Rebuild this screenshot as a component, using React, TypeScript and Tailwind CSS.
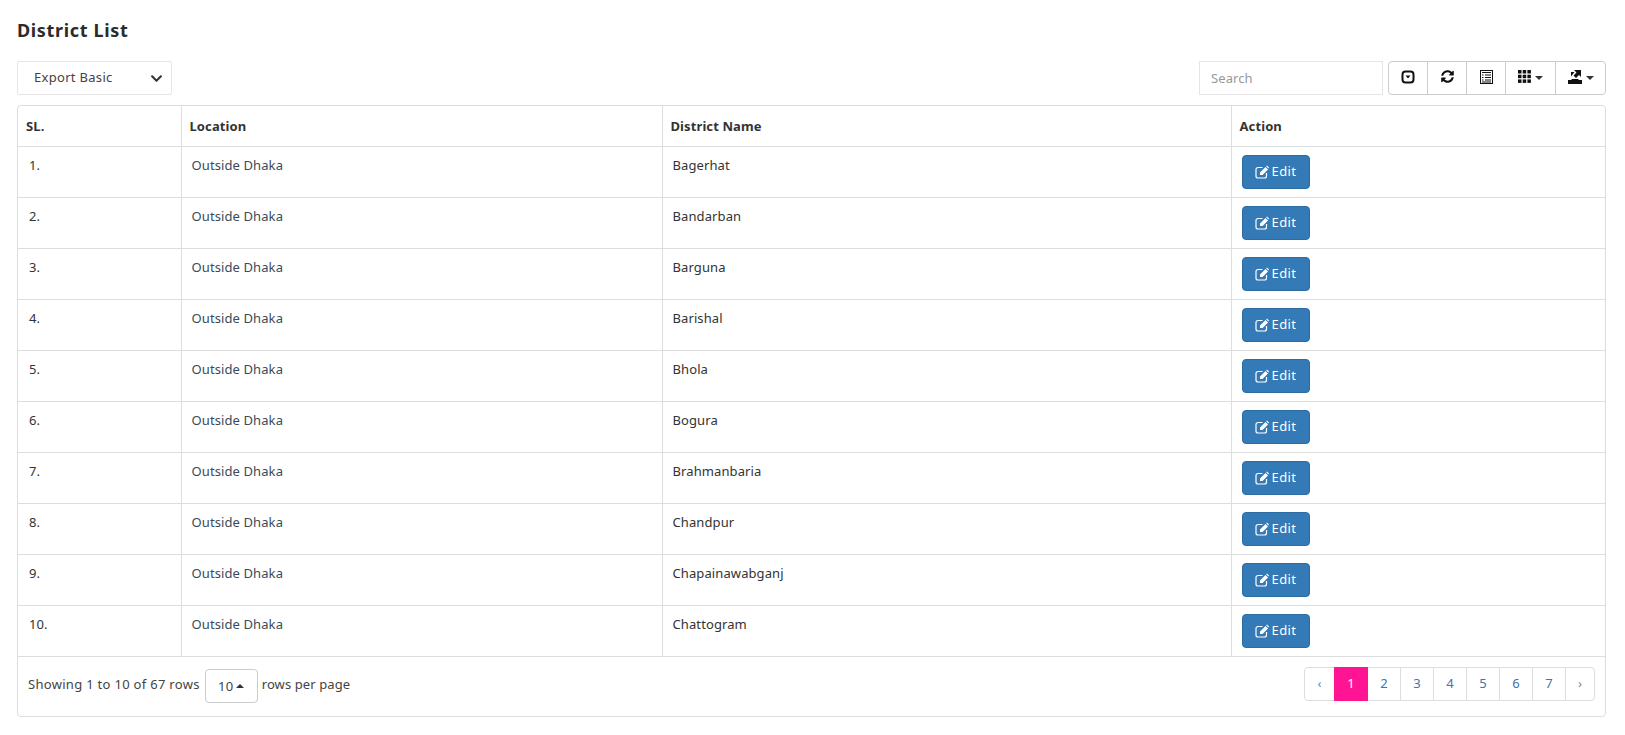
import React from "react";
import { FaSyncAlt, FaChevronDown } from "react-icons/fa";

const names = ["Bagerhat","Bandarban","Barguna","Barishal","Bhola","Bogura","Brahmanbaria","Chandpur","Chapainawabganj","Chattogram"];

function Caret({ up }: { up?: boolean }) {
  return <span className={up ? "inline-block w-0 h-0 border-x-[4px] border-x-transparent border-b-[4px] border-b-[#333] ml-[3px]" : "inline-block w-0 h-0 border-x-[4px] border-x-transparent border-t-[4px] border-t-[#333] ml-[4px] mt-[2px]"} />;
}

function EditIcon() {
  return (
    <svg width="14" height="14" viewBox="0 0 14 14" fill="none">
      <path d="M7.500 2.500H3a2 2 0 0 0-2 2v6.500a2 2 0 0 0 2 2h6.500a2 2 0 0 0 2-2V8" stroke="#fff" strokeWidth="1.200" />
      <path d="M5 7.500 10.500 2 13 4.500 7.500 10H5z M11.200 1.300 12 .6l2 2-.7.800z" fill="#fff" />
    </svg>
  );
}

function ListIcon() {
  return (
    <svg width="13" height="14" viewBox="0 0 13 14" fill="none">
      <rect x=".5" y=".5" width="12" height="13" stroke="#111" />
      <path d="M2 2.500h9M2 5h1.500M5 5h6M2 7.500h1.500M5 7.500h6M2 10h1.500M5 10h6M2 12h9" stroke="#111" strokeWidth="1.100" />
    </svg>
  );
}

function GridIcon() {
  return (
    <svg width="13" height="13" viewBox="0 0 13 13" fill="#111">
      <rect x="0" y="0" width="3.500" height="3.500" /><rect x="4.700" y="0" width="3.500" height="3.500" /><rect x="9.400" y="0" width="3.500" height="3.500" />
      <rect x="0" y="4.700" width="3.500" height="3.500" /><rect x="4.700" y="4.700" width="3.500" height="3.500" /><rect x="9.400" y="4.700" width="3.500" height="3.500" />
      <rect x="0" y="9.400" width="3.500" height="3.500" /><rect x="4.700" y="9.400" width="3.500" height="3.500" /><rect x="9.400" y="9.400" width="3.500" height="3.500" />
    </svg>
  );
}

function ExportIcon() {
  return (
    <svg width="14" height="14" viewBox="0 0 14 14" fill="#111">
      <path d="M0 14v-4h3l1-1h6l1 1h3v4z" />
      <path d="M6 0h7v7l-2-2-3 3-2.500-2.500 3-3z" />
      <path d="M3 2h3.500L3 6.500z" />
    </svg>
  );
}

export default function App() {
  return (
    <div className="bg-white min-h-screen pl-[17px] pr-[19px] pt-[19px] text-[13px] tracking-[0.1px] text-[#333] font-['Noto_Sans',sans-serif]">
      <h1 className="text-[18px] leading-[22px] font-bold tracking-[0.65px] text-[#2b2b2b] mb-[20px]">District List</h1>
      <div className="flex items-center justify-between mb-[10px] h-[34px]">
        <div className="w-[155px] h-[34px] border border-[#e5e5e5] rounded-[2px] flex items-center justify-between pl-[16px] pr-[8px] text-[#444] tracking-[0.3px]">
          <span>Export Basic</span>
          <FaChevronDown className="w-[13px] h-[13px] text-[#333]" />
        </div>
        <div className="flex items-center">
          <div className="w-[184px] h-[34px] border border-[#e5e5e5] flex items-center pl-[11px] pt-[1px] text-[#999]">Search</div>
          <div className="ml-[5px] flex h-[34px] border border-[#ccc] rounded-[4px] text-[#111]">
            <div className="w-[39px] flex items-center justify-center border-r border-[#ccc] pb-[3px]">
              <svg width="14" height="14" viewBox="0 0 13 14"><rect x="1" y="1.500" width="11" height="11" rx="3" fill="none" stroke="#111" strokeWidth="2" /><path d="M4 5.500h5L6.500 8.500z" fill="#111" /></svg>
            </div>
            <div className="w-[39px] flex items-center justify-center border-r border-[#ccc] pb-[3px]"><FaSyncAlt className="w-[13px] h-[13px]" /></div>
            <div className="w-[39px] flex items-center justify-center border-r border-[#ccc] pb-[3px]"><ListIcon /></div>
            <div className="w-[50px] flex items-center justify-center border-r border-[#ccc] pb-[3px]"><GridIcon /><Caret /></div>
            <div className="w-[49px] flex items-center justify-center pb-[3px]">
              <ExportIcon />
              <Caret />
            </div>
          </div>
        </div>
      </div>
      <div className="border border-[#ddd] rounded-[4px] overflow-hidden">
        <table className="w-full table-fixed border-collapse">
          <colgroup>
            <col className="w-[163px]" /><col className="w-[481px]" /><col className="w-[569px]" /><col />
          </colgroup>
          <thead>
            <tr className="h-[40px] font-bold text-[#333] text-left">
              <th className="px-[8px] pt-[1px] border-r border-b border-[#ddd]">SL.</th>
              <th className="px-[8px] pt-[1px] border-r border-b border-[#ddd]">Location</th>
              <th className="px-[8px] pt-[1px] border-r border-b border-[#ddd]">District Name</th>
              <th className="px-[8px] pt-[1px] border-b border-[#ddd]">Action</th>
            </tr>
          </thead>
          <tbody>
            {names.map((n, i) => (
              <tr key={n} className="h-[51px]">
                <td className="align-top pt-[8px] px-[11px] border-r border-b border-[#ddd] leading-[20px]">{i + 1}.</td>
                <td className="align-top pt-[8px] px-[10px] border-r border-b border-[#ddd] leading-[20px] text-[#3a4a5a]">Outside Dhaka</td>
                <td className="align-top pt-[8px] px-[10px] border-r border-b border-[#ddd] leading-[20px]">{n}</td>
                <td className="align-top pt-[8px] px-[10px] border-b border-[#ddd]">
                  <div className="w-[68px] h-[34px] bg-[#337ab7] border border-[#2e6da4] rounded-[4px] text-white flex items-center justify-center gap-[3px]">
                    <EditIcon /><span className="tracking-[0.4px]">Edit</span>
                  </div>
                </td>
              </tr>
            ))}
          </tbody>
        </table>
        <div className="h-[59px] flex items-center justify-between pl-[10px] pr-[10px]">
          <div className="flex items-center text-[#444] tracking-[0.3px]">
            <span className="mb-[3px]">Showing 1 to 10 of 67 rows</span>
            <div className="ml-[5px] mr-[4px] w-[53px] h-[34px] border border-[#ccc] rounded-[4px] flex items-center justify-center"><span className="mt-[1px]">10</span><Caret up /></div>
            <span className="mb-[3px] tracking-[0.1px]">rows per page</span>
          </div>
          <div className="flex h-[34px] border border-[#ddd] rounded-[4px] text-[#3f74ad] -mt-[4px]">
            <div className="w-[29px] flex items-center justify-center text-[#6b8db5]">‹</div>
            <div className="w-[34px] flex items-center justify-center bg-[#ff1493] text-white -my-px">1</div>
            {[2,3,4,5,6,7].map(p => <div key={p} className="w-[33px] flex items-center justify-center border-r border-[#ddd]">{p}</div>)}
            <div className="w-[28px] flex items-center justify-center text-[#6b8db5]">›</div>
          </div>
        </div>
      </div>
    </div>
  );
}
